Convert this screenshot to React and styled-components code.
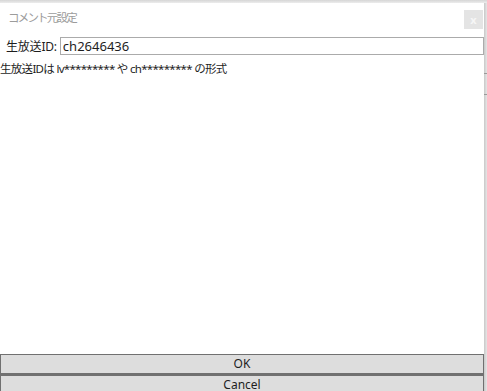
import React, { useState } from "react";
import styled, { createGlobalStyle } from "styled-components";

const GlobalStyle = createGlobalStyle`
  html, body {
    margin: 0;
    padding: 0;
    background: #e4e4e4;
  }
  body {
    font-family: "Noto Sans", "Noto Sans CJK JP", sans-serif;
    color: #1e1e1e;
  }
`;

const Desk = styled.div`
  width: 487px;
  height: 391px;
  overflow: hidden;
  display: flex;
  background: linear-gradient(to bottom, #d6d6d6 0px, #ececec 3px, #e2e2e2 100%);
`;

const Window = styled.div`
  margin-top: 3px;
  width: 484px;
  height: 391px;
  background: #fff;
  display: flex;
  flex-direction: column;
  flex-shrink: 0;
`;

const BackStrip = styled.div`
  flex: 1;
  margin-top: 3px;
  background:
    linear-gradient(#9a9a9a, #9a9a9a) 0 70px / 100% 1px no-repeat,
    linear-gradient(#9a9a9a, #9a9a9a) 0 91px / 100% 1px no-repeat,
    linear-gradient(to right, #c8c8c8, #e6e6e6);
`;

const TitleBar = styled.div`
  height: 28px;
  display: flex;
  align-items: center;
  justify-content: space-between;
  padding-left: 8px;
`;

const Title = styled.div`
  font-family: "Noto Sans CJK JP", sans-serif;
  font-size: 11.5px;
  letter-spacing: -1.8px;
  color: #9c9c9c;
`;

const CloseButton = styled.div`
  width: 19px;
  height: 19px;
  margin-right: 1px;
  align-self: flex-start;
  margin-top: 7px;
  background: #e4e4e4;
  color: #f6f6f6;
  font-size: 11px;
  font-weight: bold;
  display: flex;
  align-items: center;
  justify-content: center;
  line-height: 1;
`;

const FieldRow = styled.div`
  display: flex;
  align-items: center;
  margin-top: 6px;
  height: 18px;
`;

const Label = styled.label`
  font-size: 12px;
  padding-left: 6px;
  white-space: nowrap;
  letter-spacing: -0.2px;
`;

const Input = styled.input`
  box-sizing: border-box;
  flex: 1;
  min-width: 0;
  height: 18px;
  margin-left: 3px;
  border: 1px solid #ababab;
  padding: 0 2px;
  font-family: "Noto Sans", sans-serif;
  font-size: 13px;
  color: #1e1e1e;
  outline: none;
`;

const Help = styled.div`
  font-size: 11.5px;
  margin-top: 5px;
  letter-spacing: -0.7px;
  white-space: nowrap;
`;

const Spacer = styled.div`
  flex: 1;
`;

const DialogButton = styled.button`
  display: block;
  flex-shrink: 0;
  width: 100%;
  height: 20px;
  margin: 0;
  padding: 0;
  border: 1px solid #707070;
  border-top-width: ${({ top }) => top}px;
  background: #dddddd;
  font-family: "Noto Sans", sans-serif;
  font-size: 12px;
  color: #1e1e1e;
  line-height: 1;
`;

export default function App() {
  const [id, setId] = useState("ch2646436");
  return (
    <>
      <GlobalStyle />
      <Desk>
        <Window>
          <TitleBar>
            <Title>コメント元設定</Title>
            <CloseButton>x</CloseButton>
          </TitleBar>
          <FieldRow>
            <Label>生放送ID:</Label>
            <Input value={id} onChange={(e) => setId(e.target.value)} />
          </FieldRow>
          <Help>生放送IDは lv********* や ch********* の形式</Help>
          <Spacer />
          <DialogButton top={1}>OK</DialogButton>
          <DialogButton top={2}>Cancel</DialogButton>
        </Window>
        <BackStrip />
      </Desk>
    </>
  );
}
